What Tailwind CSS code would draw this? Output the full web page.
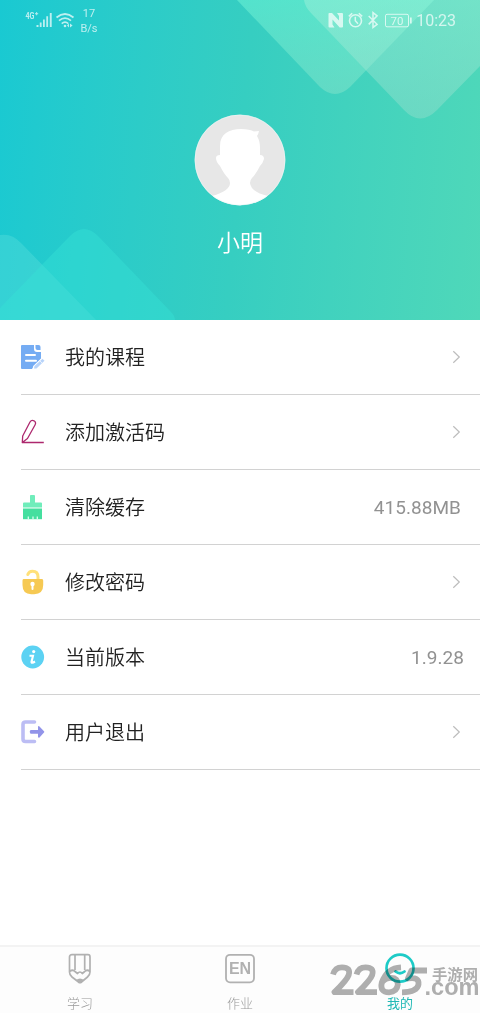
<!DOCTYPE html>
<html lang="zh-CN">
<head>
<meta charset="utf-8">
<meta name="viewport" content="width=device-width, initial-scale=1">
<title>我的</title>
<script src="https://cdn.jsdelivr.net/npm/@tailwindcss/browser@4"></script>
</head>
<body class="h-[1013px] overflow-hidden bg-white font-['Roboto','Noto_Sans_CJK_SC',sans-serif] text-[#222]">
<div class="relative flex h-[1013px] w-[480px] flex-col overflow-hidden">
  <header class="relative flex h-[320px] shrink-0 flex-col items-center overflow-hidden bg-linear-95 from-[#19c9d2] via-[#36cec1] to-[#4fd8b9]">
    <!-- translucent rounded diamonds -->
    <svg class="absolute inset-0" width="480" height="320" viewBox="0 0 480 320">
      <defs>
        <linearGradient id="d1" x1="0" y1="0" x2="0" y2="1"><stop offset="0" stop-color="#7dffdc" stop-opacity=".42"/><stop offset="1" stop-color="#a0ead0" stop-opacity=".36"/></linearGradient>
        <linearGradient id="d2" x1="0" y1="0" x2="0" y2="1"><stop offset="0" stop-color="#a8f3dc" stop-opacity=".42"/><stop offset="1" stop-color="#a8e0d0" stop-opacity=".36"/></linearGradient>
      </defs>
      <path fill="url(#d1)" d="M237 0L320 87Q335 101 350 87L434 0Z"/>
      <path fill="url(#d2)" d="M304 0Q305 7 311 13L404 110Q420 127 437 110L480 66V0Z"/>
      <path fill="#5ce0dc" fill-opacity=".38" d="M0 235Q12 233 21 243L96 320H0Z"/>
      <path fill="#38e2d6" fill-opacity=".42" d="M0 308L70 236Q84 222 98 236L171 312Q175 316 175 320H0Z"/>
    </svg>
    <div class="relative flex h-10 w-full items-center justify-between pl-[25px] pr-6 text-white/70">
      <div class="flex items-center">
        <svg width="50" height="20" viewBox="0 0 50 20" fill="currentColor">
          <text x="0.5" y="9" font-size="8.500" font-weight="700" textLength="9" lengthAdjust="spacingAndGlyphs">4G</text>
          <path d="M10 3.300h3.200v.9H10zM11.200 2h.9v3.300h-.9z"/>
          <path d="M11.500 15h2v2h-2zM14.800 12.500h1.800V17h-1.800zM18 9.500h1.800V17H18zM21.300 6.200h1.800V17h-1.800zM24.800 3h1.900v14h-1.900z"/>
          <path d="M31.500 7.500q8.500-7 17 0M34 10.700q6-5 12 0M36.700 13.600q3.300-2.800 6.600 0" fill="none" stroke="currentColor" stroke-width="1.700"/>
          <circle cx="40" cy="16" r="1.300"/><path d="M42 15.500l2-2v4zM45 13.500l2.600 2-2.600 2z"/>
        </svg>
        <div class="ml-[4px] w-[20px] pt-[1px] text-center text-[11px] leading-[15px]">17<br>B/s</div>
      </div>
      <div class="flex items-center">
        <svg width="84" height="20" viewBox="0 0 84 20" fill="none" stroke="currentColor">
          <path fill="currentColor" stroke="none" d="M.5 3.500Q.5 3 1.500 3H4L11 10.500V6L9 3H14Q15 3 15 4V16.500Q15 17.500 14 17.500H11.700L4.500 9.500V14.500L6.500 17.500H1.500Q.5 17.500.5 16.500Z"/>
          <circle cx="27.500" cy="10.700" r="6" stroke-width="1.600"/>
          <path stroke-width="1.500" d="M27.300 6.700v4l2.700 3M20.800 6.400l3.400-3.100M30.800 3.300l3.400 3.100"/>
          <path stroke-width="1.500" d="M40.700 6l8.400 8.300L45 17.400V2.600l4.100 3.300-8.400 8.500"/>
          <rect x="57.500" y="4.300" width="23" height="12.500" rx="1.500" stroke-width="1"/>
          <path fill="currentColor" stroke="none" d="M82 7.500h1.700v6H82z"/>
          <text x="69" y="14.500" text-anchor="middle" font-size="11.500" fill="currentColor" stroke="none">70</text>
        </svg>
        <span class="ml-1 pt-[2px] text-[16px] leading-5">10:23</span>
      </div>
    </div>
    <svg class="relative mt-[74px] shrink-0" width="92" height="92" viewBox="0 0 92 92">
      <clipPath id="av"><circle cx="46" cy="46" r="45.200"/></clipPath>
      <circle cx="46" cy="46" r="45.200" fill="#e7e7e7"/>
      <path clip-path="url(#av)" fill="#fff" d="M26 41V32C26 20 35 15 47 15Q56 15 60 17.500L65 17Q64.500 20 63 22Q66 27 66 34V41Q70 41 70 45Q69 49 66 52Q62 60 58 64Q56 66 56 69Q57 78 74 82V92H18V82Q36 77 36 69Q36 66 34 64Q30 60 26 52Q22 48 22 44Q22 41 26 41Z"/>
      <circle cx="46" cy="46" r="45" fill="none" stroke="#ecf8f6" stroke-width=".6"/>
    </svg>
    <h1 class="relative mt-[20px] text-[23px] leading-9 font-[350] text-white">小明</h1>
  </header>

  <main class="flex-1 pl-[21px] text-[20px]">
    <div class="flex h-[75px] items-center border-b border-[#d2d2d2] pr-[19px]">
      <svg width="24" height="26" viewBox="0 0 24 26">
        <path fill="#75acf3" d="M1 1H13v4q0 3 3 3h4v7l-9 10H1Q0 25 0 24V2Q0 1 1 1Z"/>
        <path fill="#75acf3" d="M14.500 1h3Q19.500 1 19.500 3V6h-3q-2 0-2-2z"/>
        <path stroke="#fff" stroke-width="2" stroke-linecap="round" d="M5 11H14M5 16.700H15"/>
        <path fill="#fff" d="M20.500 14l3 3-8 8h-4l.7-3z"/>
        <path fill="#b8d4fa" d="M21.500 14.800l2 2-8 7.700H13l.5-2.500z"/><path d="M19 17l2 2" stroke="#fff" stroke-width=".7"/>
      </svg>
      <span class="ml-5 pt-[2px] font-[350]">我的课程</span>
      <svg class="ml-auto" width="10" height="14" viewBox="0 0 10 14" fill="none" stroke="#bdbdbd" stroke-width="1.200"><path d="M2.300 1.200L8.300 7l-6 5.800"/></svg>
    </div>
    <div class="flex h-[75px] items-center border-b border-[#d2d2d2] pr-[19px]">
      <svg width="24" height="26" viewBox="0 0 24 26" fill="none" stroke="#ad286e" stroke-width="1.300">
        <path stroke-linejoin="round" d="M1.300 23.500L1.700 17L9 3Q10.500 .5 13 1.800Q15.500 3.200 14 6L6.500 19.500L1.300 23.500H22.800"/>
      </svg>
      <span class="ml-5 pt-[2px] font-[350]">添加激活码</span>
      <svg class="ml-auto" width="10" height="14" viewBox="0 0 10 14" fill="none" stroke="#bdbdbd" stroke-width="1.200"><path d="M2.300 1.200L8.300 7l-6 5.800"/></svg>
    </div>
    <div class="flex h-[75px] items-center border-b border-[#d2d2d2] pr-[19px]">
      <svg width="24" height="26" viewBox="0 0 24 26">
        <path fill="#70edbb" d="M9 1.500Q9 1 10 1H13Q14 1 14 2V8.500h6q1 0 1 1V13.500H2V9.500q0-1 1-1h6z"/>
        <path fill="#45df9f" d="M2 14.500h19v10.700H2z"/>
        <path stroke="#d8fff0" stroke-width="1.300" d="M7.300 22.500V25.200M12 22.500V25.200M16.300 22.500V25.200"/>
      </svg>
      <span class="ml-5 pt-[2px] font-[350]">清除缓存</span>
      <span class="ml-auto pt-[3px] text-[19px] tracking-[0.05px] text-[#929292]">415.88MB</span>
    </div>
    <div class="flex h-[75px] items-center border-b border-[#d2d2d2] pr-[19px]">
      <svg width="24" height="26" viewBox="0 0 24 26">
        <path fill="none" stroke="#ffe17a" stroke-width="3" stroke-linecap="round" d="M6.800 5.500Q8 2.200 11.500 2.200Q17 2.200 17 8V11"/>
        <path fill="#f6c953" d="M2.500 10h18.500q1.200 0 1.200 1.500V16q0 9.200-9 9.200h-3q-8.700 0-8.700-9.200v-4.500Q1.500 10 2.500 10Z"/>
        <circle cx="11.500" cy="15" r="2.200" fill="#fff"/><path d="M11.500 15v5" stroke="#fff" stroke-width="2" stroke-linecap="round"/>
      </svg>
      <span class="ml-5 pt-[2px] font-[350]">修改密码</span>
      <svg class="ml-auto" width="10" height="14" viewBox="0 0 10 14" fill="none" stroke="#bdbdbd" stroke-width="1.200"><path d="M2.300 1.200L8.300 7l-6 5.800"/></svg>
    </div>
    <div class="flex h-[75px] items-center border-b border-[#d2d2d2] pr-4">
      <svg width="24" height="26" viewBox="0 0 24 26">
        <circle cx="11.700" cy="13" r="11.400" fill="#5cd2f3"/>
        <circle cx="12.700" cy="7.600" r="1.600" fill="#fff"/>
        <path fill="none" stroke="#fff" stroke-width="2.100" d="M8.500 11.800H12L10.500 18Q10.400 19.700 14 17.500"/>
      </svg>
      <span class="ml-5 pt-[2px] font-[350]">当前版本</span>
      <span class="ml-auto pt-[3px] text-[19px] tracking-[0.05px] text-[#929292]">1.9.28</span>
    </div>
    <div class="flex h-[75px] items-center border-b border-[#d2d2d2] pr-[19px]">
      <svg width="24" height="26" viewBox="0 0 24 26">
        <path fill="none" stroke="#bcbdf4" stroke-width="3.600" stroke-linecap="round" d="M13.500 3H4.500Q2 3 2 5.500V20Q2 22.500 4.500 22.500H13.500"/>
        <path fill="#9294e9" d="M9.500 11H17V7.500q.5-1 1.500 0L23 12.200q.8.700 0 1.400L18.500 18.500q-1 .8-1.500-.5V14.700H9.500q-1.700-1.800 0-3.700Z"/>
      </svg>
      <span class="ml-5 pt-[2px] font-[350]">用户退出</span>
      <svg class="ml-auto" width="10" height="14" viewBox="0 0 10 14" fill="none" stroke="#bdbdbd" stroke-width="1.200"><path d="M2.300 1.200L8.300 7l-6 5.800"/></svg>
    </div>
  </main>

  <nav class="grid h-[68px] shrink-0 grid-cols-3 border-t-2 border-[#f3f3f3] bg-[#fdfdfd] text-[13px] leading-5 font-light text-[#999]">
    <div class="flex flex-col items-center pt-[6px]">
      <svg class="shrink-0" width="32" height="32" viewBox="0 0 32 32" fill="none" stroke="#b1b1b1" stroke-width="1.700">
        <path stroke-linejoin="round" d="M8 1.700H24Q26 1.700 26 4V19Q26 22 23.500 24L17.500 29Q16 30.300 14.500 29L8 24Q5.500 22 5.500 19V4Q5.500 1.700 8 1.700ZM11 2V17M20.700 2V17M5.500 18.500Q9 16 11 18.500L13.500 20.500Q16 17.500 18.300 20.500L20.700 18.500Q23 16 26 18.500"/>
        <path fill="#b1b1b1" stroke="none" d="M12 27q4-3 8 0l-4 3z"/>
      </svg>
      <span class="mt-[9px]">学习</span>
    </div>
    <div class="flex flex-col items-center pt-[6px]">
      <svg class="shrink-0" width="32" height="32" viewBox="0 0 32 32">
        <rect x="2" y="1.800" width="28" height="27.500" rx="4" fill="none" stroke="#b1b1b1" stroke-width="1.800"/>
        <text x="5" y="21.200" font-family="Liberation Sans" font-size="16" font-weight="700" fill="#b1b1b1" textLength="22">EN</text>
      </svg>
      <span class="mt-[9px]">作业</span>
    </div>
    <div class="flex flex-col items-center pt-[6px] text-[#20b9b5]">
      <svg class="shrink-0" width="32" height="32" viewBox="0 0 32 32" fill="none" stroke="#1ecbc7">
        <circle cx="16" cy="15.200" r="13.500" stroke-width="2.700"/>
        <path d="M11.500 18.500Q16 22 20.500 18.500" stroke-width="2.800" stroke-linecap="round"/>
      </svg>
      <span class="mt-[9px] font-normal">我的</span>
    </div>
  </nav>

  <!-- site watermark over the tab bar -->
  <svg class="pointer-events-none absolute right-0 bottom-0 mix-blend-multiply" width="160" height="68" viewBox="0 0 160 68">
    <g fill="none" stroke="#b0b0b0" stroke-width="5.800" stroke-linejoin="round">
      <path d="M13 29.500Q15 22.300 22 22.300Q31 22.300 28.700 30Q27 35 14.500 47.200H33.500"/>
      <path d="M36.500 29.500Q38.500 22.300 45.500 22.300Q54.500 22.300 52.200 30Q50.500 35 38 47.200H57"/>
      <path d="M81 22.300Q67 23 61.800 37.500Q59.500 47.300 69 47.300Q77 47 77.800 39.500Q77.800 32.800 71 32.800Q65.500 32.800 62.300 37"/>
      <path d="M107 25.500H91.500L88 33.500Q99.500 31.500 98.500 39.500Q97 47.300 82 47.300"/>
    </g>
    <g fill="#b0b0b0" font-weight="700">
      <text x="112" y="34.500" font-size="15" textLength="46" lengthAdjust="spacingAndGlyphs">手游网</text>
      <text x="104.500" y="50.200" font-family="Liberation Sans" font-size="23" textLength="55" lengthAdjust="spacingAndGlyphs">.com</text>
    </g>
  </svg>
</div>
</body>
</html>
